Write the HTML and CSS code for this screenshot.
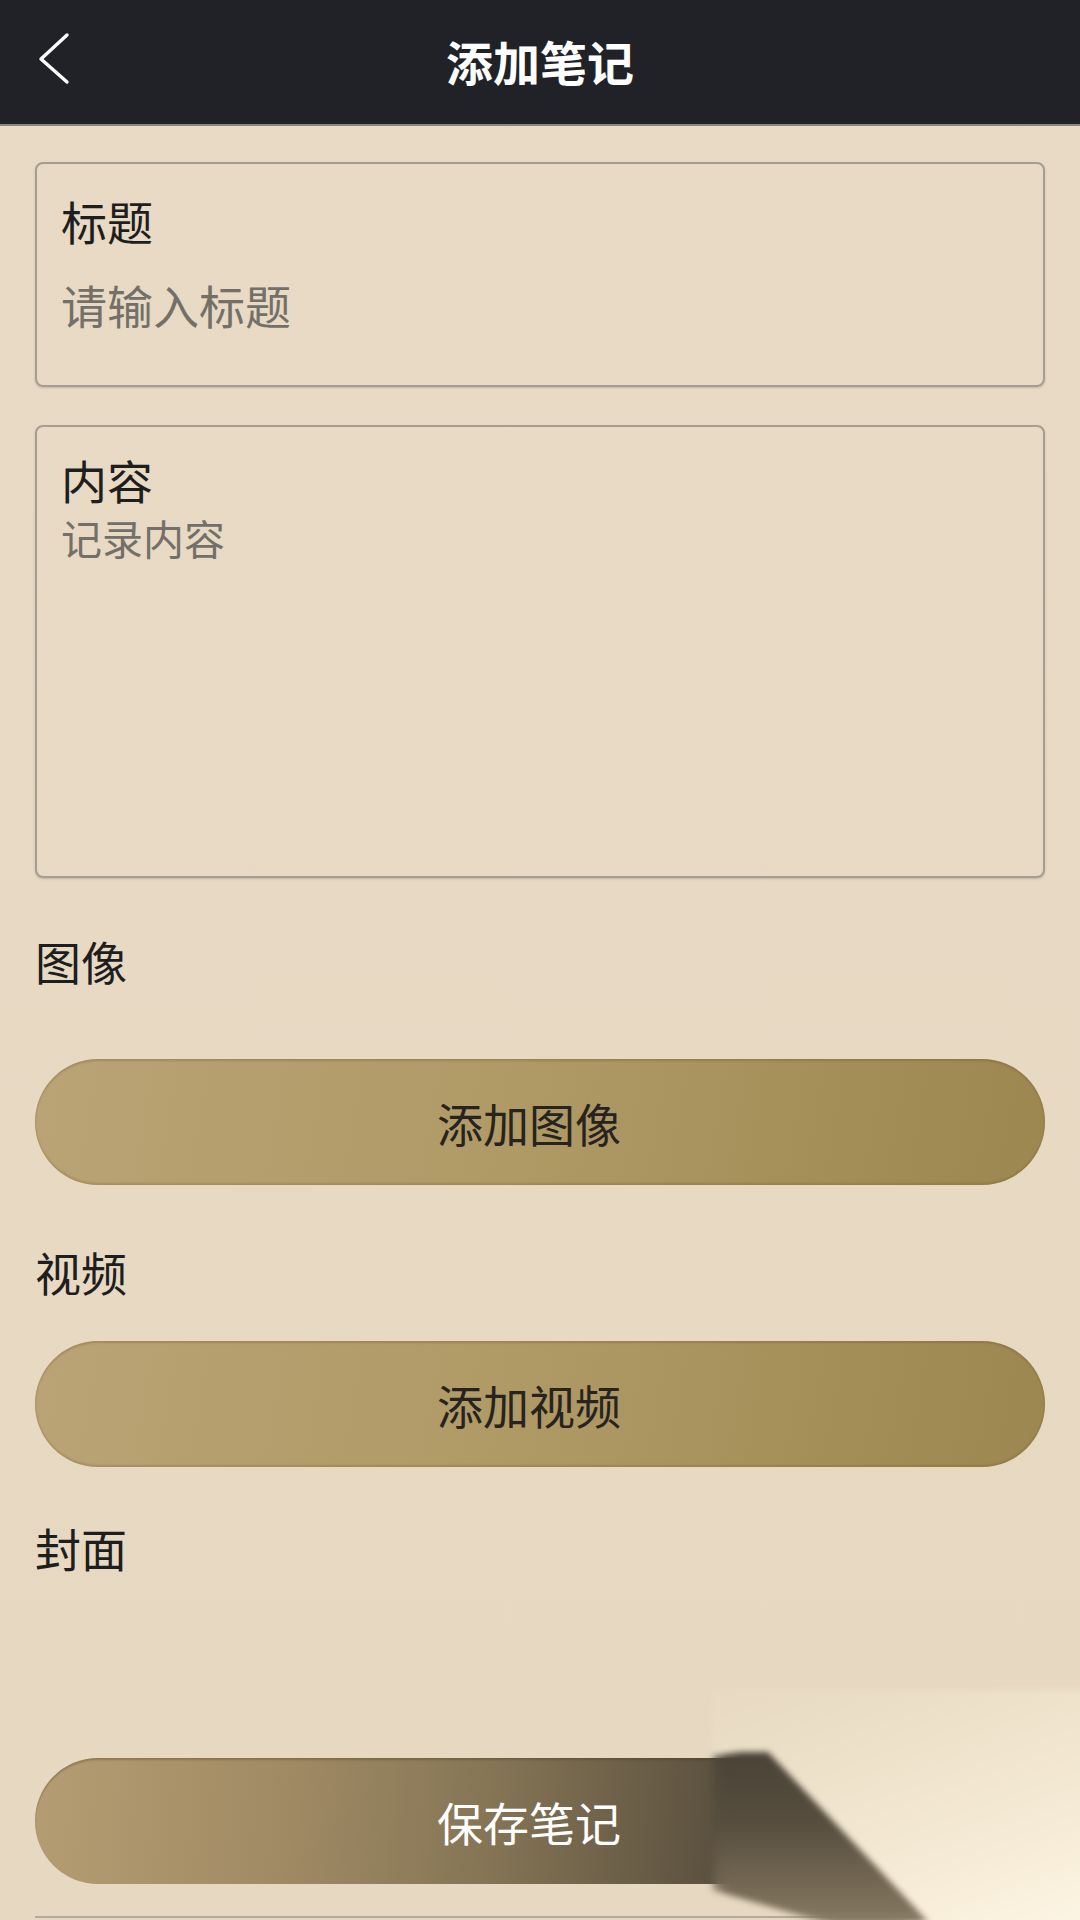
FILE: index.html
```html
<!DOCTYPE html>
<html lang="zh-CN">
<head>
  <meta charset="UTF-8" />
  <meta name="viewport" content="width=device-width, initial-scale=1" />
  <title>添加笔记</title>
  <link rel="stylesheet" href="styles.css">
</head>
<body>
  <!-- Top bar -->
  <header class="topbar">
    <button class="back-btn" aria-label="返回">
      <svg width="40" height="60" viewBox="0 0 40 60">
        <polyline points="32,5 6,29 32,52" fill="none" stroke="#fff" stroke-width="3.4" stroke-linecap="round" stroke-linejoin="round" />
      </svg>
    </button>
    <h1 class="topbar-title">添加笔记</h1>
  </header>

  <main class="note-form">
    <!-- Title -->
    <div class="field-card">
      <label class="field-label" for="note-title">标题</label>
      <input class="field-input" id="note-title" type="text" placeholder="请输入标题" />
    </div>

    <!-- Content -->
    <div class="field-card content-card">
      <label class="field-label" for="note-content">内容</label>
      <textarea class="field-textarea" id="note-content" placeholder="记录内容"></textarea>
    </div>

    <div class="section-label image-label">图像</div>
    <button class="pill-btn image-btn">添加图像</button>

    <div class="section-label video-label">视频</div>
    <button class="pill-btn video-btn">添加视频</button>

    <div class="section-label cover-label">封面</div>
    <div class="cover-area"></div>

    <button class="save-btn">保存笔记</button>
    <div class="more-row">删除笔记</div>
  </main>

  <!-- peeled corner over the save button -->
  <div class="curl">
    <div class="curl-shadow"></div>
    <div class="curl-sheet"></div>
  </div>
</body>
</html>
```

FILE: styles.css
```css
* {
  box-sizing: border-box;
  margin: 0;
  padding: 0;
}
html, body {
  width: 1080px;
  height: 1920px;
  overflow: hidden;
}
body {
  position: relative;
  font-family: "Noto Sans CJK SC", "Noto Sans", sans-serif;
  background: linear-gradient(180deg, #e8dac4 0%, #e6d8c1 100%);
  color: #222;
}

/* Top bar */
.topbar {
  height: 126px;
  background: #202228;
  border-bottom: 2px solid #8f8574;
  display: flex;
  align-items: center;
  justify-content: center;
  position: relative;
}
.back-btn {
  position: absolute;
  left: 30px;
  top: 30px;
  width: 50px;
  height: 60px;
  background: none;
  border: none;
  display: flex;
  align-items: center;
  justify-content: center;
}
.topbar-title {
  color: #fff;
  font-size: 47px;
  font-weight: 700;
  line-height: 56px;
  margin-top: -2px;
}

/* Form */
.note-form {
  padding: 36px 35px 0;
  display: flex;
  flex-direction: column;
}
.field-card {
  border: 2px solid #a59d90;
  border-radius: 8px;
  padding: 28px 24px 53px;
  display: flex;
  flex-direction: column;
  box-shadow: 0 1px 2px rgba(90, 80, 60, 0.25);
}
.field-label {
  font-size: 46px;
  line-height: 56px;
  color: #1e1e1e;
}
.field-input {
  margin-top: 28px;
  height: 56px;
  font-family: inherit;
  font-size: 46px;
  color: #333;
  background: transparent;
  border: none;
  outline: none;
}
.field-input::placeholder {
  color: #737069;
}
.content-card {
  margin-top: 38px;
  padding: 24px 24px 22px;
}
.field-textarea {
  margin-top: 6px;
  height: 341px;
  font-family: inherit;
  font-size: 41px;
  line-height: 48px;
  color: #333;
  background: transparent;
  border: none;
  outline: none;
  resize: none;
}
.field-textarea::placeholder {
  color: #737069;
}

.section-label {
  font-size: 46px;
  line-height: 56px;
  color: #1e1e1e;
}
.image-label { margin-top: 54px; }
.video-label { margin-top: 58px; }
.cover-label { margin-top: 52px; }

.pill-btn {
  height: 126px;
  border: none;
  border-radius: 63px;
  padding-right: 22px;
  font-family: inherit;
  font-size: 46px;
  color: #262320;
  background: linear-gradient(100deg, #baa375 0%, #b09a66 45%, #9d8750 100%);
  box-shadow: inset 0 2px 2px rgba(90, 70, 30, 0.25), inset 0 -2px 2px rgba(90, 70, 30, 0.2);
}
.image-btn { margin-top: 71px; }
.video-btn { margin-top: 42px; }

.cover-area {
  height: 183px;
}

.save-btn {
  height: 126px;
  border: none;
  border-radius: 63px;
  padding-right: 22px;
  font-family: inherit;
  font-size: 46px;
  color: #fff;
  background: linear-gradient(95deg, #b59d72 0%, #a08a64 25%, #857555 45%, #665a45 62%, #4c4436 75%, #3f3a30 100%);
  box-shadow: inset 0 2px 2px rgba(60, 50, 30, 0.3);
}
.more-row {
  margin-top: 32px;
  border-top: 2px solid #b3aa9b;
  font-size: 40px;
  line-height: 40px;
  color: #8a8277;
  text-align: center;
  padding-right: 22px;
}

/* peeled corner */
.curl {
  position: absolute;
  left: 712px;
  top: 1690px;
  width: 380px;
  height: 240px;
  filter: blur(3px);
}
.curl-shadow {
  position: absolute;
  inset: 0;
  background: linear-gradient(180deg, #3f3a30 0%, #564d3e 55%, #8a7c64 100%);
  clip-path: polygon(0 66px, 58px 58px, 226px 230px, 140px 240px, 0 200px);
  filter: blur(8px);
}
.curl-sheet {
  position: absolute;
  inset: 0;
  background: linear-gradient(160deg, #e7d9c2 0%, #eee2cb 35%, #f6ebd6 70%, #fdf6e4 100%);
  clip-path: polygon(0 0, 380px 0, 380px 240px, 224px 240px, 56px 62px, 0 62px);
}
```
